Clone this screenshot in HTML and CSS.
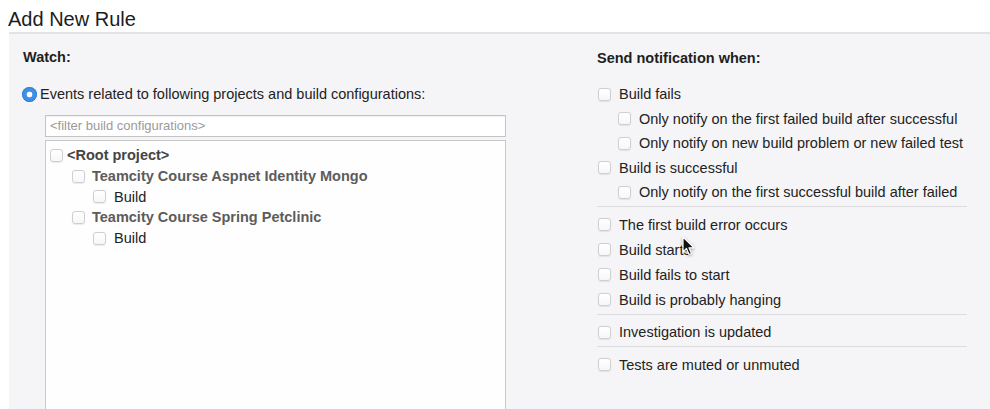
FILE: index.html
```html
<!DOCTYPE html>
<html>
<head>
<meta charset="utf-8">
<link rel="stylesheet" href="styles.css">
</head>
<body>
<h1 class="title">Add New Rule</h1>
<div class="panel">
  <div class="col-left">
    <div class="heading">Watch:</div>
    <div class="radio-row"><span class="radio"></span><span>Events related to following projects and build configurations:</span></div>
    <div class="filter">&lt;filter build configurations&gt;</div>
    <div class="tree">
      <div class="node root"><span class="cb"></span><span class="proj">&lt;Root project&gt;</span></div>
      <div class="node lvl1"><span class="cb"></span><span class="proj">Teamcity Course Aspnet Identity Mongo</span></div>
      <div class="node lvl2"><span class="cb"></span><span>Build</span></div>
      <div class="node lvl1"><span class="cb"></span><span class="proj">Teamcity Course Spring Petclinic</span></div>
      <div class="node lvl2"><span class="cb"></span><span>Build</span></div>
    </div>
  </div>
  <div class="col-right">
    <div class="heading heading-right">Send notification when:</div>
    <div class="group group-first">
      <div class="opt"><span class="cb"></span><span>Build fails</span></div>
      <div class="opt sub"><span class="cb"></span><span>Only notify on the first failed build after successful</span></div>
      <div class="opt sub"><span class="cb"></span><span>Only notify on new build problem or new failed test</span></div>
      <div class="opt"><span class="cb"></span><span>Build is successful</span></div>
      <div class="opt sub"><span class="cb"></span><span>Only notify on the first successful build after failed</span></div>
    </div>
    <div class="sep"></div>
    <div class="group">
      <div class="opt"><span class="cb"></span><span>The first build error occurs</span></div>
      <div class="opt"><span class="cb"></span><span>Build starts</span></div>
      <div class="opt"><span class="cb"></span><span>Build fails to start</span></div>
      <div class="opt"><span class="cb"></span><span>Build is probably hanging</span></div>
    </div>
    <div class="sep"></div>
    <div class="group">
      <div class="opt"><span class="cb"></span><span>Investigation is updated</span></div>
    </div>
    <div class="sep"></div>
    <div class="group">
      <div class="opt"><span class="cb"></span><span>Tests are muted or unmuted</span></div>
    </div>
  </div>
  <svg class="cursor" width="14" height="22" viewBox="0 0 14 22"><path d="M1 1 L1 16 L4.5 12.5 L7 18.5 L9.5 17.5 L7 11.8 L12 11.8 Z" fill="#111" stroke="#fff" stroke-width="1.2" stroke-linejoin="round"/></svg>
</div>
</body>
</html>
```
FILE: styles.css
```css
html, body {
  margin: 0;
  padding: 0;
  background: #ffffff;
  overflow: hidden;
  height: 409px;
  font-family: "Liberation Sans", Arial, sans-serif;
  color: #222;
}
.title {
  margin: 8px 0 1px 8px;
  font-size: 20px;
  font-weight: normal;
  line-height: 23px;
  color: #1c1c1c;
}
.panel {
  position: relative;
  box-sizing: border-box;
  margin-left: 9px;
  height: 377px;
  border-top: 2px solid #e3e3e7;
  background: #f5f5f7;
  display: grid;
  grid-template-columns: 483px 1fr;
  column-gap: 91px;
  padding-left: 14px;
  font-size: 14.5px;
}
.col-left {
  display: flex;
  flex-direction: column;
  padding-top: 14px;
  min-height: 0;
}
.col-right {
  display: flex;
  flex-direction: column;
  padding-top: 15px;
  padding-right: 23px;
}
.heading {
  font-weight: bold;
  line-height: 18px;
  color: #1e1e1e;
}
.radio-row {
  display: flex;
  align-items: center;
  gap: 3px;
  margin-top: 18px;
  margin-left: -1px;
  height: 20px;
}
.radio {
  width: 15px;
  height: 15px;
  border-radius: 50%;
  background: radial-gradient(circle, #ffffff 0 2.6px, #3e8fe6 3.2px);
  box-shadow: inset 0 0 0 1px #3583d6;
  flex: none;
}
.filter {
  margin-top: 11px;
  margin-left: 22px;
  height: 20px;
  border: 1px solid #c4c4c4;
  background: #ffffff;
  color: #9a9a9a;
  font-size: 13px;
  line-height: 20px;
  padding-left: 4px;
  box-shadow: inset 0 1px 1px rgba(0,0,0,0.06);
}
.tree {
  flex: 1;
  margin-top: 3px;
  margin-left: 22px;
  border: 1px solid #c8c8c8;
  border-bottom: none;
  background: #fefefe;
  padding-top: 4px;
  padding-left: 4px;
}
.node {
  display: flex;
  align-items: center;
  height: 20.7px;
  color: #222;
}
.node .cb { margin-right: 4px; }
.lvl1 { padding-left: 22px; }
.lvl1 .cb { margin-right: 7px; }
.lvl2 { padding-left: 43px; }
.lvl2 .cb { margin-right: 8px; }
.proj {
  font-weight: bold;
  color: #5c5c5c;
}
.root .proj { color: #444; }
.cb {
  display: inline-block;
  box-sizing: border-box;
  width: 13px;
  height: 13px;
  border: 1px solid #cfcfcf;
  border-radius: 3px;
  background: linear-gradient(#ffffff, #f7f7f7);
  box-shadow: 0 0.5px 1px rgba(0,0,0,0.08);
  flex: none;
}
.group-first { margin-top: 15px; }
.group-first .opt { height: 24.5px; }
.opt {
  display: flex;
  align-items: center;
  height: 25px;
  padding-left: 1px;
}
.opt .cb { margin-right: 8px; }
.opt.sub { padding-left: 21px; }
.sep {
  height: 1px;
  background: #dcdcde;
  margin: 1.5px 0 5px 0;
}
.cursor {
  position: absolute;
  left: 673px;
  top: 202px;
  filter: drop-shadow(0 1px 1.5px rgba(0,0,0,0.35));
}
```
